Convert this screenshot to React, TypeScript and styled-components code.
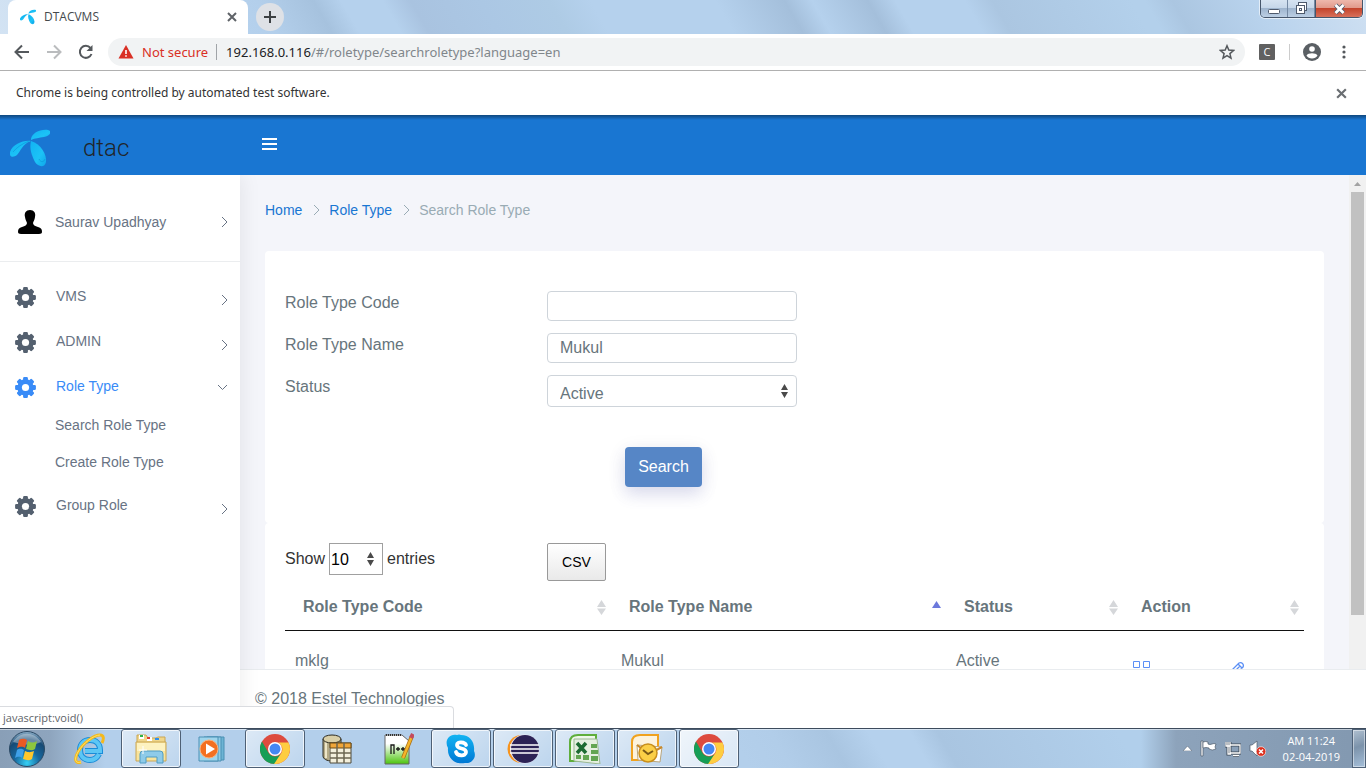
import React from 'react';
import styled, { createGlobalStyle, css } from 'styled-components';

const Global = createGlobalStyle`
  *, *::before, *::after { box-sizing: border-box; }
  html, body { margin: 0; height: 100%; }
  body { font-family: "Liberation Sans", Arial, sans-serif; font-size: 16px; line-height: 24px; color: #67757c; background: #fff; overflow: hidden; }
  button, input, select { font-family: inherit; margin: 0; }
  button { padding: 0; border: 0; background: none; display: flex; align-items: center; justify-content: center; }
  a { text-decoration: none; color: inherit; }
  svg { display: block; flex: none; }
  h1, ul, ol { margin: 0; padding: 0; list-style: none; font-weight: normal; }
`;

const uiFont = css`font-family: "Open Sans", "Noto Sans", sans-serif;`;
const wideUiFont = css`font-family: "Noto Sans", "Open Sans", sans-serif;`;

const Screen = styled.div`
  display: flex;
  flex-direction: column;
  height: 100vh;
`;

/* ---------- browser frame ---------- */

const TitleBar = styled.div`
  display: flex;
  height: 34px;
  padding-left: 8px;
  background: linear-gradient(60deg,
    #d3e3f3 0%, #b5d1ed 18%, #b3cfeb 20%, #a6c2de 24%, #b5d1ed 26%, #b5d1ed 29%,
    #a9c3e0 31%, #abc7e4 36%, #aecbe5 41%, #b5d1ed 44%, #b5d1ed 53%,
    #a4bfdb 58%, #b5d1ed 60%, #a4bfdb 64%, #b5d1ed 66%, #b5d1ed 71%,
    #abc6e1 73%, #b3d0eb 83%, #b3d0eb 84%, #abc6e1 86%, #b9d3ed 92%, #cfe0f2 100%);
`;

const Tab = styled.div`
  ${uiFont}
  display: flex;
  align-items: center;
  gap: 8px;
  width: 240px;
  padding: 0 10px 0 12px;
  border-radius: 8px 8px 0 0;
  background: #fff;
  font-size: 12px;
  color: #45494d;
`;

const TabTitle = styled.span`flex: 1;`;

const NewTab = styled.button`
  width: 28px;
  height: 28px;
  margin: 3px 8px;
  border-radius: 50%;
  background: #dee1e6;
`;

const WindowButtons = styled.div`
  display: flex;
  height: 18px;
  margin-left: auto;
  margin-right: 3px;
  border: 1px solid #46566b;
  border-top: 0;
  border-radius: 0 0 5px 5px;
  overflow: hidden;
  box-shadow: 0 0 0 1px rgba(255, 255, 255, 0.6);
`;

const WindowButton = styled.button<{ $close?: boolean }>`
  width: ${p => (p.$close ? 47 : 27)}px;
  border-left: ${p => (p.$close ? 1 : 0)}px solid #46566b;
  border-right: ${p => (p.$close ? 0 : 1)}px solid #7489a3;
  background: ${p => (p.$close
    ? 'linear-gradient(#eeb8ac, #e29a8b 45%, #c4442c 50%, #d8705a)'
    : 'linear-gradient(#d6e3f1, #c6d7e9 45%, #9fb5ce 50%, #bccfe4)')};
`;

const Toolbar = styled.div`
  ${uiFont}
  display: flex;
  align-items: center;
  height: 37px;
  padding: 0 12px;
  border-bottom: 1px solid #b0b0b0;
  background: #fff;
`;

const NavButton = styled.button`
  width: 20px;
  height: 20px;
  margin-right: 12px;
`;

const AddressBar = styled.div`
  ${wideUiFont}
  display: flex;
  flex: 1;
  align-items: center;
  height: 28px;
  padding: 0 10px;
  border-radius: 14px;
  background: #f1f3f4;
  font-size: 13px;
  color: #80868b;
`;

const NotSecure = styled.span`
  margin: 0 9px 0 8px;
  padding-right: 8px;
  border-right: 1px solid #a0a4a8;
  line-height: 16px;
  color: #d93025;
`;

const Url = styled.span`
  flex: 1;
  b { font-weight: normal; color: #202124; }
`;

const ToolbarEnd = styled.div`
  display: flex;
  align-items: center;
  margin-left: 14px;
`;

const Extension = styled.button`
  ${uiFont}
  width: 16px;
  height: 16px;
  border-radius: 1px;
  background: #606060;
  color: #fff;
  font-size: 11px;
  line-height: 16px;
`;

const Divider = styled.span`
  width: 1px;
  height: 16px;
  margin: 0 13px 0 14px;
  background: #ccc;
`;

const MenuButton = styled.button`margin: 0 8px 0 21px;`;

const InfoBar = styled.div`
  ${wideUiFont}
  display: flex;
  align-items: center;
  justify-content: space-between;
  height: 44px;
  padding: 0 18px 0 16px;
  background: #fff;
  font-size: 12px;
  color: #333;
`;

/* ---------- web page ---------- */

const Page = styled.div`
  position: relative;
  display: flex;
  flex: 1;
  flex-direction: column;
  min-height: 0;
`;

const Header = styled.header`
  display: flex;
  align-items: center;
  height: 60px;
  padding-bottom: 2px;
  background: linear-gradient(rgba(0, 0, 0, 0.4), rgba(0, 0, 0, 0) 5px) #1976d2;
`;

const Brand = styled.a`
  display: flex;
  align-items: center;
  gap: 33px;
  width: 262px;
  padding: 8px 0 0 10px;
  font-family: Roboto, sans-serif;
  font-size: 24px;
  font-weight: 300;
  color: #212529;
`;

const Body = styled.div`
  display: flex;
  flex: 1;
  min-height: 0;
`;

const Sidebar = styled.nav`
  position: relative;
  z-index: 1;
  width: 240px;
  background: #fff;
  box-shadow: 1px 0 20px rgba(0, 0, 0, 0.08);
  clip-path: inset(0 -30px 0 0);
  font-size: 14px;
  color: #687384;
`;

const UserRow = styled.a`
  display: flex;
  align-items: center;
  height: 87px;
  padding: 8px 12px 0 17px;
  border-bottom: 1px solid #ebedef;
`;

const UserName = styled.span`
  flex: 1;
  padding-left: 12px;
`;

const Menu = styled.ul`padding-top: 13px;`;

const MenuItem = styled.a<{ $active?: boolean }>`
  display: flex;
  align-items: center;
  height: 45px;
  padding: 0 12px 0 15px;
  color: ${p => (p.$active ? '#398bf7' : 'inherit')};
`;

const MenuLabel = styled.span`
  flex: 1;
  padding: 0 0 3px 20px;
`;

const Arrow = styled.span<{ $down?: boolean }>`
  padding-top: ${p => (p.$down ? 0 : 5)}px;
  color: #687384;
`;

const SubMenu = styled.ul`
  margin: -3px 0 3px;
  a { display: block; padding-left: 55px; line-height: 37px; }
`;

const Main = styled.main`
  display: flex;
  flex: 1;
  flex-direction: column;
  min-width: 0;
`;

const ScrollArea = styled.div`
  display: flex;
  flex: 1;
  min-height: 0;
  overflow: hidden;
`;

const Content = styled.div`
  flex: 1;
  min-width: 0;
  padding: 0 25px;
  background: #f4f5fa;
`;

const Breadcrumb = styled.ol`
  display: flex;
  align-items: center;
  height: 76px;
  padding-bottom: 6px;
  font-size: 14px;
  color: #99abb4;
  a { color: #1976d2; }
`;

const Separator = styled.li`padding: 0 9px 0 11px;`;

const Card = styled.section`
  padding: 20px;
  border-radius: 4px;
  background: #fff;
`;

const SearchForm = styled.form`padding: 20px 0 16px;`;

const Field = styled.div`
  display: grid;
  grid-template-columns: 262px 250px;
  margin-bottom: 12px;
  label { line-height: 24px; }
`;

const control = css`
  width: 100%;
  border: 1px solid #ced4da;
  border-radius: 4px;
  background: #fff;
  font-size: 16px;
  color: #67757c;
`;

const TextInput = styled.input`
  ${control}
  height: 30px;
  padding: 0 12px;
`;

const SelectWrap = styled.span<{ $small?: boolean }>`
  position: relative;
  display: block;
  width: ${p => (p.$small ? '54px' : 'auto')};
  svg { position: absolute; top: 8px; right: 8px; pointer-events: none; }
`;

const Select = styled.select`
  ${control}
  height: 32px;
  padding: 4px 12px 0;
  appearance: none;
`;

const LengthSelect = styled.select`
  width: 100%;
  height: 32px;
  padding: 0 1px;
  border: 1px solid #a0a0a0;
  border-radius: 0;
  background: #fff;
  font-size: 16px;
  color: #000;
  appearance: none;
`;

const SearchButton = styled.button`
  width: 77px;
  height: 40px;
  margin: 40px 0 0 340px;
  border-radius: 4px;
  background: #5686c6;
  box-shadow: 0 4px 20px rgba(0, 0, 0, 0.08), 0 8px 16px rgba(90, 100, 220, 0.14);
  font-size: 16px;
  color: #fff;
`;

const TableTools = styled.div`
  display: grid;
  grid-template-columns: 262px auto;
  justify-content: start;
  align-items: start;
`;

const LengthLabel = styled.label`
  display: flex;
  align-items: center;
  gap: 4px;
  color: #333;
`;

const CsvButton = styled.button`
  width: 59px;
  height: 38px;
  border: 1px solid #999;
  border-radius: 2px;
  background: linear-gradient(#fff, #e9e9e9);
  font-size: 14px;
  color: #000;
`;

const Table = styled.table`
  width: 100%;
  table-layout: fixed;
  border-collapse: collapse;
`;

const Th = styled.th<{ $width?: number }>`
  width: ${p => (p.$width ? `${p.$width}px` : 'auto')};
  height: 49px;
  padding: 4px 5px 0 18px;
  border-bottom: 1px solid #111;
  text-align: left;
  font-weight: bold;
  > div { display: flex; align-items: center; justify-content: space-between; }
`;

const Td = styled.td`
  height: 58px;
  padding: 18px 10px;
  vertical-align: top;
`;

const Actions = styled.div`
  display: flex;
  gap: 78px;
  padding-top: 12px;
`;

const ScrollTrack = styled.div`
  width: 17px;
  padding: 0 2px;
  background: #f1f1f1;
`;

const ScrollUp = styled.button`
  width: 13px;
  height: 17px;
`;

const ScrollThumb = styled.div`
  height: calc(89% - 17px);
  background: #c1c1c1;
`;

const Footer = styled.footer`
  height: 59px;
  padding: 17px 15px;
  border-top: 1px solid #e9ecef;
  background: #fff;
`;

const StatusBubble = styled.div`
  ${uiFont}
  position: absolute;
  left: 0;
  bottom: 0;
  z-index: 2;
  width: 454px;
  height: 22px;
  padding-left: 3px;
  border: solid #dadce0;
  border-width: 1px 1px 0 0;
  border-radius: 0 4px 0 0;
  background: #fff;
  font-size: 11px;
  line-height: 21px;
  color: #606468;
`;

/* ---------- task bar ---------- */

const TaskBar = styled.div`
  display: flex;
  height: 40px;
  border-top: 1px solid #3d4b5c;
  box-shadow: inset 0 1px 0 rgba(255, 255, 255, 0.5);
  background:
    linear-gradient(90deg, #899fb7, #8ea5be 50px, rgba(142, 165, 190, 0) 105px),
    linear-gradient(270deg, #8298b0, #8da3bb 190px, rgba(142, 165, 190, 0) 225px),
    linear-gradient(60deg, #b3cfeb 54%, #b1cde9 57%, #a9c5e1 61%, #b5d1ed 64%, #b5d1ed 67%, #a9c5e1 69%, #b1cfeb 82%);
`;

const Tasks = styled.div`
  display: flex;
  flex: 1;
  gap: 2px;
`;

const StartButton = styled.button`
  width: 59px;
  padding-right: 5px;
`;

const TaskButton = styled.button<{ $open?: boolean; $current?: boolean }>`
  width: 60px;
  height: 39px;
  ${p => p.$open && css`
    border: 1px solid #4e6075;
    border-radius: 3px;
    box-shadow: inset 0 0 0 1px rgba(255, 255, 255, 0.7);
    background: linear-gradient(135deg, rgba(255, 255, 255, ${p.$current ? 0.8 : 0.55}), rgba(255, 255, 255, ${p.$current ? 0.5 : 0.12}));
  `}
`;

const Tray = styled.div`
  ${uiFont}
  display: flex;
  align-items: center;
  font-size: 11px;
  line-height: 16px;
  color: #fff;
  text-align: center;
`;

const TrayIcons = styled.div`
  display: flex;
  align-items: center;
  gap: 8px;
  margin-right: 17px;
`;

const ShowDesktop = styled.button`
  width: 14px;
  height: 39px;
  margin-left: 12px;
  border: 1px solid #4f6278;
  box-shadow: inset 0 0 0 1px rgba(255, 255, 255, 0.45);
  background: linear-gradient(160deg, #b0c0d0, #7c93ab 45%, #a5bfd9);
`;

/* ---------- drawings ---------- */

const Propeller = ({ size }: { size: number }) => (
  <svg width={size} height={size} viewBox="0 0 40 40">
    <defs>
      <linearGradient id="blade" x1="0" y1="0" x2="1" y2="1">
        <stop offset="0" stopColor="#12b2f3" />
        <stop offset=".6" stopColor="#1cc3f6" />
        <stop offset="1" stopColor="#10a6ea" />
      </linearGradient>
    </defs>
    <g fill="url(#blade)">
      <path d="M21 11C22 5 30 1 38 2c5 1 2 6-4 7-5 1-9 1-13 3Z" />
      <path d="M21 13C13 12 3 16 0 24c-1 5 3 6 7 3 4-4 5-11 14-14Z" />
      <path d="M21 13c10 3 16 14 15 21-1 6-8 5-11 0-3-6-6-13-4-21Z" />
    </g>
    <path d="M3 24c4-5 9-8 16-11M29 31c2 4 5 3 6 0" fill="none" stroke="#0787cf" strokeOpacity=".45" />
  </svg>
);

const Cross = ({ size, color }: { size: number; color: string }) => (
  <svg width={size} height={size} viewBox="0 0 12 12" stroke={color} strokeWidth="2">
    <path d="M2 2l8 8M10 2l-8 8" />
  </svg>
);

const Gear = () => (
  <svg width="21" height="21" viewBox="-10.5 -10.5 21 21">
    <mask id="gearHole" maskUnits="userSpaceOnUse" x="-11" y="-11" width="22" height="22">
      <rect x="-11" y="-11" width="22" height="22" fill="#fff" />
      <circle r="3.600" fill="#000" />
    </mask>
    <g fill="currentColor" mask="url(#gearHole)">
      <circle r="8.200" />
      {[0, 45, 90, 135].map(a => (
        <rect key={a} x="-2.4" y="-10.4" width="4.8" height="20.8" rx="1.2" transform={`rotate(${a})`} />
      ))}
    </g>
  </svg>
);

const GearColor = styled.span<{ $active?: boolean }>`
  color: ${p => (p.$active ? '#398bf7' : '#54606f')};
`;

const ChevronRight = () => (
  <svg width="7" height="12" viewBox="0 0 7 12" fill="none" stroke="currentColor">
    <path d="M1 1l5 5-5 5" />
  </svg>
);

const ChevronDown = () => (
  <svg width="11" height="7" viewBox="0 0 11 7" fill="none" stroke="currentColor">
    <path d="M1 1l4.500 4.500L10 1" />
  </svg>
);

const Spinner = () => (
  <svg width="9" height="16" viewBox="0 0 9 16" fill="#4a4a4a">
    <path d="M4.500 1L8 7H1zM4.500 15L1 9h7z" />
  </svg>
);

const SortMark = ({ asc }: { asc?: boolean }) => (
  <svg width="9" height="15" viewBox="0 0 9 15" fill="#d5d7da">
    {asc ? <path d="M4.500 1L9 8H0z" fill="#6c79dc" /> : <path d="M4.500 0L9 7H0zM4.500 15L0 8.500h9z" />}
  </svg>
);

const StartOrb = () => (
  <svg width="38" height="38" viewBox="0 0 38 38">
    <defs>
      <radialGradient id="orb" cx=".5" cy=".9" r=".9">
        <stop offset="0" stopColor="#35d0f5" />
        <stop offset=".4" stopColor="#17689f" />
        <stop offset=".75" stopColor="#174a74" />
        <stop offset="1" stopColor="#8fb2cc" />
      </radialGradient>
    </defs>
    <circle cx="19" cy="19" r="17.500" fill="url(#orb)" stroke="#2b4964" />
    <path d="M5 12c7-11 21-11 28 0-9 5-19 2-28 0Z" fill="#fff" opacity=".35" />
    <path d="M11 10c3-2 6-1 8 0l-2 8c-3-2-5-1-8 0Z" fill="#ea5a24" />
    <path d="M20 11c3 2 6 2 9 0l-2 8c-3 2-6 1-9 0Z" fill="#8cc63e" />
    <path d="M9 20c3-2 5-1 7 0l-2 8c-2-2-5-1-7 0Z" fill="#3fa0e8" />
    <path d="M17 21c4 2 6 1 9 0l-2 8c-3 2-6 1-9 0Z" fill="#ffc72c" />
  </svg>
);

const Explorer = () => (
  <svg width="32" height="30" viewBox="0 0 32 30">
    <path d="M2 1h9l2 3h8l2-1h7v8H2z" fill="#f0d68a" stroke="#c9a654" />
    <path d="M4 3h5M12 5h5" stroke="#fff" strokeWidth="4" />
    <path d="M5 2h3" stroke="#2db34a" strokeWidth="2" />
    <path d="M12 4h3" stroke="#e03c2e" strokeWidth="2" />
    <path d="M20 5h4" stroke="#2d8ff0" strokeWidth="2" />
    <path d="M1 8h30v19H1z" fill="#f8e49d" stroke="#c9a654" />
    <path d="M2 9h28v8H2z" fill="#fdf2c0" />
    <path d="M5 29v-9q0-3 3-3h17q3 0 3 3v9h-6v-6H11v6z" fill="#8ecbe9" stroke="#4f9cc4" />
    <path d="M8 12v8M4 16h8" stroke="#fff" />
  </svg>
);

const InternetExplorer = () => (
  <svg width="32" height="32" viewBox="0 0 32 32" fill="none">
    <path d="M26 21c-2 4-5 6-9 6-6 0-10-4-10-10S11 7 17 7s10 4 10 10v1H12" stroke="#1a8cd8" strokeWidth="6" />
    <path d="M26 21c-2 4-5 6-9 6-6 0-10-4-10-10S11 7 17 7s10 4 10 10v1H12" stroke="#5cc6f5" strokeWidth="4" />
    <path d="M8 29c-6 2-7-3-3-10C10 10 21 2 27 2c4 0 4 4 2 8" stroke="#f4b91c" strokeWidth="3" />
    <path d="M8 29c-6 2-7-3-3-10C10 10 21 2 27 2" stroke="#fde46c" />
  </svg>
);

const MediaPlayer = () => (
  <svg width="30" height="28" viewBox="0 0 30 28">
    <path d="M9 2h17v23H9z" fill="#6cb4d4" stroke="#4a90b4" />
    <path d="M6 2h17v24H6z" fill="#8fcbe5" stroke="#4a90b4" />
    <path d="M1 2h19v24H1z" fill="#9fd5ec" stroke="#4a90b4" />
    <circle cx="11" cy="14" r="9" fill="#f37021" stroke="#fbb27c" />
    <path d="M8 8.500v11l9-5.500z" fill="#fff" />
  </svg>
);

const Chrome = () => (
  <svg width="30" height="30" viewBox="-15 -15 30 30">
    <circle r="15" fill="#dd4b3e" />
    <path d="M-13-7.500A15 15 0 0 0 0 15L6.500 3.700A7.500 7.500 0 0 1-6.500 3.700Z" fill="#169e56" />
    <path d="M13.500-6.500A15 15 0 0 1-1 15L6.500 3.700A7.500 7.500 0 0 0 3-6.500Z" fill="#fecd41" />
    <circle r="7" fill="#fff" />
    <circle r="5.500" fill="#4587f3" />
  </svg>
);

const Database = () => (
  <svg width="30" height="30" viewBox="0 0 30 30">
    <path d="M1 5v17c0 3 4 5 9 5s9-2 9-5V5z" fill="#b5ab87" stroke="#2c2a22" />
    <path d="M4 8v16M8 9v17" stroke="#eee6c8" strokeWidth="2" />
    <ellipse cx="10" cy="5" rx="9" ry="4" fill="#d9cfa8" stroke="#2c2a22" />
    <path d="M8 9h21v20H8z" fill="#f4f0dc" stroke="#4f4a3a" />
    <path d="M8 9h21v5H8z" fill="#f0a63a" stroke="#6b4a14" />
    <path d="M15 9v20M22 9v20M8 19h21M8 24h21" stroke="#6c6650" strokeWidth="1.500" />
  </svg>
);

const NotepadPlus = () => (
  <svg width="30" height="32" viewBox="0 0 30 32">
    <defs>
      <linearGradient id="npp" x1="0" y1="0" x2="0" y2="1">
        <stop offset=".3" stopColor="#fff" />
        <stop offset="1" stopColor="#4cc40e" />
      </linearGradient>
    </defs>
    <path d="M1 2h17l7 6v23H1z" fill="url(#npp)" stroke="#666" />
    <path d="M2 2h16" stroke="#333" strokeWidth="2" strokeDasharray="1 1" />
    <path d="M7 21v-9h3v9M12 16h4M14 14v4M17 16h4M19 14v4" fill="none" stroke="#181818" strokeWidth="1.300" />
    <path d="M28 3l-9 22" stroke="#a86d12" strokeWidth="4" />
    <path d="M28 3l-9 22" stroke="#f4b52a" strokeWidth="2.500" />
    <path d="M29 1l-2 4" stroke="#c44b5d" strokeWidth="4" />
  </svg>
);

const Skype = () => (
  <svg width="30" height="30" viewBox="0 0 30 30">
    <defs>
      <linearGradient id="sky" x1="0" y1="0" x2="0" y2="1">
        <stop stopColor="#12b4f2" />
        <stop offset="1" stopColor="#0078d4" />
      </linearGradient>
    </defs>
    <g fill="url(#sky)">
      <path d="M15 1c9 0 14 7 13 16 3 6-2 13-9 12C9 31 1 24 2 14-2 7 3-1 11 1q2-1 4 0Z" />
    </g>
    <path d="M20 11c-1-3-9-4-9 0 0 5 9 2 9 7 0 5-9 4-10 0" fill="none" stroke="#fff" strokeWidth="3.800" strokeLinecap="round" />
  </svg>
);

const Eclipse = () => (
  <svg width="32" height="30" viewBox="0 0 32 30">
    <circle cx="14.500" cy="15" r="14" fill="#f7941e" />
    <circle cx="17.500" cy="15" r="14.500" fill="#e9e6f2" />
    <circle cx="18" cy="15" r="14" fill="#2c2255" />
    <path d="M3 11h29M3 15h29M3 19h29" stroke="#fff" strokeWidth="1.700" />
  </svg>
);

const Excel = () => (
  <svg width="32" height="30" viewBox="0 0 32 30">
    <path d="M1 27V8q0-7 8-7h18v26z" fill="#eef7e9" stroke="#5fae3c" strokeWidth="2" />
    <path d="M5 5h23l3 25-26-3z" fill="#e5efe0" stroke="#9bb893" />
    <path d="M22 10h6v4h-6zM22 16h7v4h-7zM22 22h7v5h-7zM14 21h6v5h-6zM7 21h5v4H7z" fill="#63a552" />
    <path d="M8 9l9 10M17 9L8 19" stroke="#1d6b32" strokeWidth="3.500" />
  </svg>
);

const Outlook = () => (
  <svg width="32" height="30" viewBox="0 0 32 30">
    <path d="M1 26V8q0-7 8-7h18v25z" fill="#fdf3dc" stroke="#f0a21e" strokeWidth="2" />
    <path d="M6 11l25 2-2 15-22-2z" fill="#fff" stroke="#b9a57c" />
    <path d="M6 11l12 9 13-7" fill="none" stroke="#c9892a" strokeWidth="2" />
    <circle cx="17" cy="19" r="9" fill="#fbcf47" stroke="#c98f1c" strokeWidth="1.500" />
    <path d="M12 16l5 4 5-3" fill="none" stroke="#7a5a18" strokeWidth="2" />
  </svg>
);

const tasks: { name: string; icon: React.ReactNode; open?: boolean; current?: boolean }[] = [
  { name: 'Internet Explorer', icon: <InternetExplorer /> },
  { name: 'Windows Explorer', icon: <Explorer />, open: true },
  { name: 'Media Player', icon: <MediaPlayer /> },
  { name: 'Chrome', icon: <Chrome />, open: true },
  { name: 'Database', icon: <Database /> },
  { name: 'Notepad++', icon: <NotepadPlus /> },
  { name: 'Skype', icon: <Skype />, open: true },
  { name: 'Eclipse', icon: <Eclipse />, open: true },
  { name: 'Excel', icon: <Excel />, open: true },
  { name: 'Outlook', icon: <Outlook />, open: true },
  { name: 'Chrome test window', icon: <Chrome />, open: true, current: true },
];

const columns: { title: string; width?: number; asc?: boolean }[] = [
  { title: 'Role Type Code' },
  { title: 'Role Type Name', width: 335, asc: true },
  { title: 'Status', width: 177 },
  { title: 'Action', width: 181 },
];

const Item = ({ label, open }: { label: string; open?: boolean }) => (
  <MenuItem href="#" $active={open}>
    <GearColor $active={open}><Gear /></GearColor>
    <MenuLabel>{label}</MenuLabel>
    <Arrow $down={open}>{open ? <ChevronDown /> : <ChevronRight />}</Arrow>
  </MenuItem>
);

const BrowserFrame = () => (
  <>
    <TitleBar>
      <Tab>
        <Propeller size={16} />
        <TabTitle>DTACVMS</TabTitle>
        <button aria-label="Close tab"><Cross size={12} color="#5f6368" /></button>
      </Tab>
      <NewTab aria-label="New tab">
        <svg width="12" height="12" viewBox="0 0 12 12" stroke="#3c4043" strokeWidth="2"><path d="M6 0v12M0 6h12" /></svg>
      </NewTab>
      <WindowButtons>
        <WindowButton aria-label="Minimize">
          <svg width="13" height="12" viewBox="0 0 13 12"><rect x=".5" y="6.500" width="11" height="4" rx="1" fill="#fff" stroke="#4f5a6c" /></svg>
        </WindowButton>
        <WindowButton aria-label="Restore">
          <svg width="13" height="13" viewBox="0 0 13 13" fill="#fff" stroke="#4f5a6c">
            <rect x="3.500" y=".5" width="8" height="8" /><rect x="1.500" y="3.500" width="8" height="8" /><rect x="4.500" y="6.500" width="2" height="2" />
          </svg>
        </WindowButton>
        <WindowButton $close aria-label="Close">
          <svg width="13" height="12" viewBox="0 0 13 12"><path d="M2.500 2l8 8M10.500 2l-8 8" stroke="#4f5a6c" strokeWidth="4.500" /><path d="M2.500 2l8 8M10.500 2l-8 8" stroke="#fff" strokeWidth="2.800" /></svg>
        </WindowButton>
      </WindowButtons>
    </TitleBar>
    <Toolbar>
      <NavButton aria-label="Back">
        <svg width="16" height="16" viewBox="0 0 16 16" fill="none" stroke="#54585c" strokeWidth="2"><path d="M15 8H2M8 1.500L1.500 8 8 14.500" /></svg>
      </NavButton>
      <NavButton aria-label="Forward">
        <svg width="16" height="16" viewBox="0 0 16 16" fill="none" stroke="#babcbe" strokeWidth="2"><path d="M1 8h13M8 1.500L14.500 8 8 14.500" /></svg>
      </NavButton>
      <NavButton aria-label="Reload">
        <svg width="16" height="16" viewBox="0 0 16 16" fill="none" stroke="#54585c" strokeWidth="2"><path d="M13.500 10A6 6 0 1 1 12.500 4" /><path d="M14.500 1v6h-6z" fill="#54585c" stroke="none" /></svg>
      </NavButton>
      <AddressBar>
        <svg width="16" height="14" viewBox="0 0 16 14"><path d="M8 0l7.500 13.500H.5z" fill="#d93025" /><path d="M8 5v4M8 10.200v1.600" stroke="#fff" strokeWidth="1.600" /></svg>
        <NotSecure>Not secure</NotSecure>
        <Url><b>192.168.0.116</b>/#/roletype/searchroletype?language=en</Url>
        <button aria-label="Bookmark">
          <svg width="16" height="16" viewBox="0 0 16 16" fill="none" stroke="#54585c" strokeWidth="1.500"><path d="M8 1.800l1.800 4.300 4.700.4-3.600 3.100 1.100 4.600L8 11.700l-4 2.500 1.100-4.600L1.500 6.500l4.700-.4z" /></svg>
        </button>
      </AddressBar>
      <ToolbarEnd>
        <Extension>C</Extension>
        <Divider />
        <button aria-label="Profile">
          <svg width="18" height="18" viewBox="0 0 18 18"><circle cx="9" cy="9" r="9" fill="#5a5f64" /><circle cx="9" cy="6" r="2.800" fill="#fff" /><path d="M3.500 12.500c1.500-3 9.500-3 11 0-2 4-9 4-11 0Z" fill="#fff" /></svg>
        </button>
        <MenuButton aria-label="Menu">
          <svg width="4" height="14" viewBox="0 0 4 14" fill="#54585c"><circle cx="2" cy="2" r="1.600" /><circle cx="2" cy="7" r="1.600" /><circle cx="2" cy="12" r="1.600" /></svg>
        </MenuButton>
      </ToolbarEnd>
    </Toolbar>
    <InfoBar>
      Chrome is being controlled by automated test software.
      <button aria-label="Dismiss"><Cross size={13} color="#6a6e72" /></button>
    </InfoBar>
  </>
);

const SidePanel = () => (
  <Sidebar>
    <UserRow href="#">
      <svg width="26" height="24" viewBox="0 0 26 24"><path d="M13 0c4 0 6 3 5 7-.4 3-1.500 4-2 6 0 2 2 3 5 4 3 1 4 2 4 5 0 1-1 2-3 2H4c-2 0-3-1-3-2 0-3 1-4 4-5 3-1 5-2 5-4-.5-2-1.600-3-2-6-1-4 1-7 5-7Z" fill="#000" /></svg>
      <UserName>Saurav Upadhyay</UserName>
      <ChevronRight />
    </UserRow>
    <Menu>
      <li><Item label="VMS" /></li>
      <li><Item label="ADMIN" /></li>
      <li>
        <Item label="Role Type" open />
        <SubMenu>
          <li><a href="#">Search Role Type</a></li>
          <li><a href="#">Create Role Type</a></li>
        </SubMenu>
      </li>
      <li><Item label="Group Role" /></li>
    </Menu>
  </Sidebar>
);

const RoleTypeSearch = () => (
  <Content>
    <Breadcrumb>
      <li><a href="#">Home</a></li>
      <Separator><ChevronRight /></Separator>
      <li><a href="#">Role Type</a></li>
      <Separator><ChevronRight /></Separator>
      <li>Search Role Type</li>
    </Breadcrumb>
    <Card>
      <SearchForm>
        <Field>
          <label htmlFor="code">Role Type Code</label>
          <TextInput id="code" type="text" />
        </Field>
        <Field>
          <label htmlFor="name">Role Type Name</label>
          <TextInput id="name" type="text" defaultValue="Mukul" />
        </Field>
        <Field>
          <label htmlFor="status">Status</label>
          <SelectWrap>
            <Select id="status"><option>Active</option></Select>
            <Spinner />
          </SelectWrap>
        </Field>
        <SearchButton type="button">Search</SearchButton>
      </SearchForm>
    </Card>
    <Card>
      <TableTools>
        <LengthLabel>
          Show
          <SelectWrap $small>
            <LengthSelect><option>10</option></LengthSelect>
            <Spinner />
          </SelectWrap>
          entries
        </LengthLabel>
        <CsvButton>CSV</CsvButton>
      </TableTools>
      <Table>
        <thead>
          <tr>
            {columns.map(c => (
              <Th key={c.title} $width={c.width}><div>{c.title}<SortMark asc={c.asc} /></div></Th>
            ))}
          </tr>
        </thead>
        <tbody>
          <tr>
            <Td>mklg</Td>
            <Td>Mukul</Td>
            <Td>Active</Td>
            <Td>
              <Actions>
                <a href="#" aria-label="View">
                  <svg width="17" height="17" viewBox="0 0 17 17" fill="none" stroke="#5b8ff5"><path d="M.5.5h6v6h-6zM10.500.5h6v6h-6zM.5 10.500h6v6h-6zM10.500 10.500h6v6h-6z" /></svg>
                </a>
                <a href="#" aria-label="Edit">
                  <svg width="17" height="17" viewBox="0 0 17 17" fill="none" stroke="#5b8ff5" strokeWidth="1.300"><path d="M1 16l1-5 9-9q2-1 3.500.500T15 6l-9 9zM10 3l4 4M4 13l8-8" /></svg>
                </a>
              </Actions>
            </Td>
          </tr>
        </tbody>
      </Table>
    </Card>
  </Content>
);

export default function App() {
  return (
    <Screen>
      <Global />
      <BrowserFrame />
      <Page>
        <Header>
          <Brand href="#"><Propeller size={40} />dtac</Brand>
          <button aria-label="Toggle menu">
            <svg width="15" height="12" viewBox="0 0 15 12" fill="#fff"><path d="M0 0h15v2H0zM0 5h15v2H0zM0 10h15v2H0z" /></svg>
          </button>
        </Header>
        <Body>
          <SidePanel />
          <Main>
            <ScrollArea>
              <RoleTypeSearch />
              <ScrollTrack>
                <ScrollUp aria-label="Scroll up"><svg width="7" height="4" viewBox="0 0 7 4"><path d="M3.500 0L7 4H0z" fill="#a3a3a3" /></svg></ScrollUp>
                <ScrollThumb />
              </ScrollTrack>
            </ScrollArea>
            <Footer>© 2018 Estel Technologies</Footer>
          </Main>
        </Body>
        <StatusBubble>javascript:void()</StatusBubble>
      </Page>
      <TaskBar>
        <StartButton aria-label="Start"><StartOrb /></StartButton>
        <Tasks>
          {tasks.map(t => (
            <TaskButton key={t.name} aria-label={t.name} $open={t.open} $current={t.current}>{t.icon}</TaskButton>
          ))}
        </Tasks>
        <Tray>
          <TrayIcons>
            <svg width="9" height="5" viewBox="0 0 9 5"><path d="M4.500 0L9 5H0z" fill="#fff" stroke="#4c5a6a" strokeWidth=".5" /></svg>
            <svg width="17" height="17" viewBox="0 0 17 17"><path d="M1 1h2v15H1z" fill="#fff" stroke="#4c5a6a" strokeWidth=".7" /><path d="M3 2q3-1 5 0v2q2 1 4 0t4 0l-1 3 1 2q-4 2-7 0V8Q6 7 3 8z" fill="#fff" stroke="#4c5a6a" strokeWidth=".7" /></svg>
            <svg width="16" height="16" viewBox="0 0 16 16" fill="none"><path d="M5 4h10v8H5zM8 14.500h6M3 1v4M1 1v4h4V1M3 5v8h3" stroke="#3c4856" strokeWidth="3" /><path d="M5 4h10v8H5zM8 14.500h6M3 1v4M1 1v4h4V1M3 5v8h3" stroke="#fff" strokeWidth="1.300" /></svg>
            <svg width="17" height="17" viewBox="0 0 17 17"><path d="M1 5h2l5-4v15l-5-5H1z" fill="#fff" stroke="#4c5a6a" strokeWidth=".7" /><circle cx="12" cy="11.500" r="4.800" fill="#dc2f1e" stroke="#fff" strokeWidth=".6" /><path d="M10 9.500l4 4M14 9.500l-4 4" stroke="#fff" strokeWidth="1.500" /></svg>
          </TrayIcons>
          <div>AM 11:24<br />02-04-2019</div>
          <ShowDesktop aria-label="Show desktop" />
        </Tray>
      </TaskBar>
    </Screen>
  );
}
